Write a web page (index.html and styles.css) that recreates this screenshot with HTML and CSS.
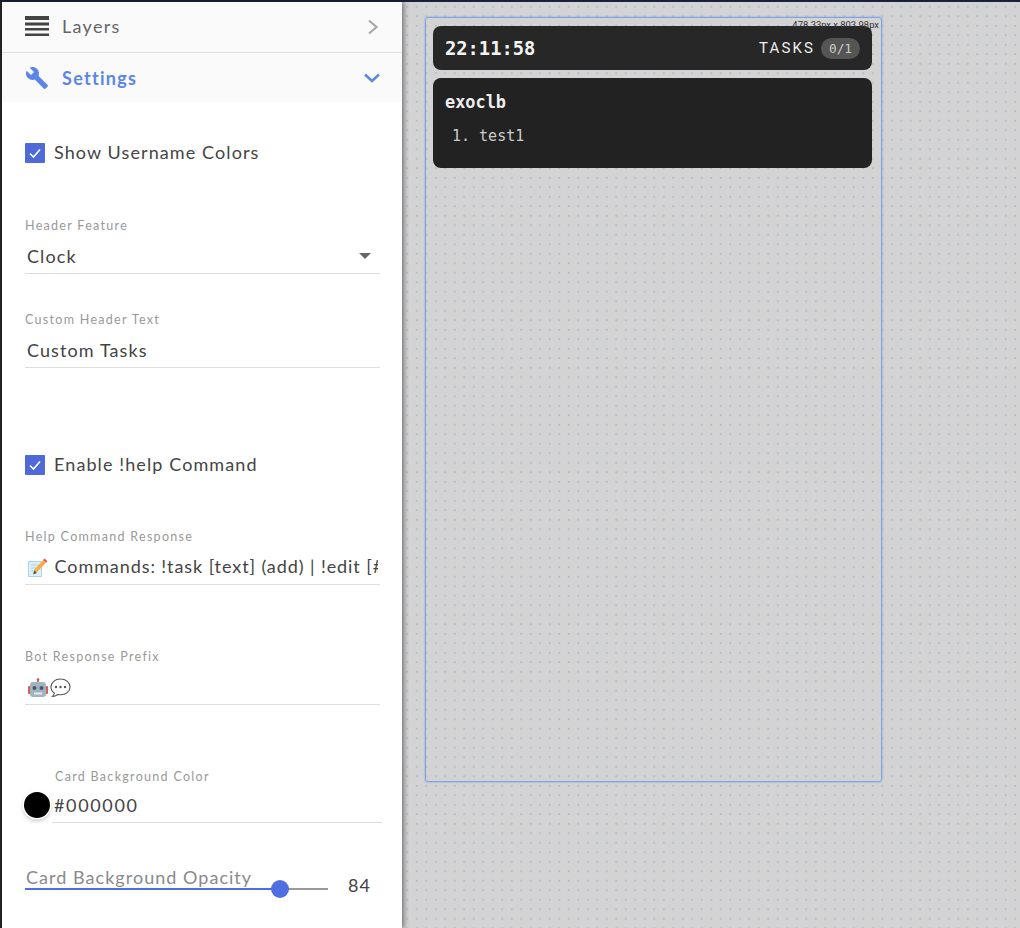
FILE: index.html
```html
<!DOCTYPE html>
<html lang="en">
<head>
    <meta charset="UTF-8">
    <title>Widget Editor</title>
    <link rel="stylesheet" href="styles.css">
</head>
<body>
    <div class="app">
        <aside class="sidebar">
            <div class="section-head">
                <svg class="head-icon" viewBox="0 0 24 20" width="24" height="20"><path fill="#444" d="M0 0h24v4H0zM0 6.5h24v3H0zM0 12h24v2.5H0zM0 17.5h24V20H0z"/></svg>
                <span class="head-title">Layers</span>
                <svg class="head-chevron chevron-right" viewBox="0 0 12 16" width="12" height="16"><path fill="none" stroke="#a8a8a8" stroke-width="2.2" d="M2 1.5 9.5 8 2 14.5"/></svg>
            </div>
            <div class="section-head section-head-open">
                <svg class="head-icon" viewBox="0 0 24 24" width="24" height="24"><path fill="#5b86e5" d="M22.7 19l-9.1-9.1c.9-2.3.4-5-1.5-6.9-2-2-5-2.4-7.4-1.3L9 6 6 9 1.6 4.7C.4 7.1.9 10.1 2.9 12.1c1.9 1.9 4.6 2.4 6.9 1.5l9.1 9.1c.4.4 1 .4 1.4 0l2.3-2.3c.5-.4.5-1.1.1-1.4z"/></svg>
                <span class="head-title">Settings</span>
                <svg class="head-chevron" viewBox="0 0 16 10" width="16" height="10"><path fill="none" stroke="#5b86e5" stroke-width="2.4" d="M1 1.5 8 8l7-6.5"/></svg>
            </div>

            <div class="settings">
                <label class="check first-check">
                    <span class="check-box"><svg viewBox="0 0 20 20" width="20" height="20"><path fill="none" stroke="#fff" stroke-width="1.6" d="M5 10.5 8.5 14 15 6.5"/></svg></span>
                    Show Username Colors
                </label>

                <div class="field field-header">
                    <div class="field-label">Header Feature</div>
                    <div class="field-input">Clock<span class="select-arrow"></span></div>
                </div>

                <div class="field field-custom">
                    <div class="field-label">Custom Header Text</div>
                    <div class="field-input">Custom Tasks</div>
                </div>

                <label class="check second-check">
                    <span class="check-box"><svg viewBox="0 0 20 20" width="20" height="20"><path fill="none" stroke="#fff" stroke-width="1.6" d="M5 10.5 8.5 14 15 6.5"/></svg></span>
                    Enable !help Command
                </label>

                <div class="field field-help">
                    <div class="field-label">Help Command Response</div>
                    <div class="field-input">
                        <div class="clip">
                            <svg class="emoji" viewBox="0 0 20 20" width="20" height="20">
                                <path fill="#dff0fb" stroke="#a9d3ee" d="M1.5 4.5h13v15h-13z"/>
                                <path stroke="#a9d3ee" d="M4 8h7M4 11h5M4 14h4"/>
                                <path fill="#f5b041" d="M7.5 12.5 16 3l3 2.8-9 9.2-3.500 1.200z"/>
                                <path fill="#e0584c" d="M16 3l1.5-1.5 3 2.8-1.5 1.500z"/>
                                <path fill="#555" d="M6 17.5l1.3-4 2.700 2.500z"/>
                            </svg>
                            Commands: !task [text] (add) | !edit [#] [text]
                        </div>
                    </div>
                </div>

                <div class="field field-prefix">
                    <div class="field-label">Bot Response Prefix</div>
                    <div class="field-input">
                        <svg class="emoji-pair" viewBox="0 0 44 20" width="44" height="20">
                            <path stroke="#c9504a" stroke-width="1.5" d="M10 4V1.5"/>
                            <circle cx="10" cy="1.5" r="1.3" fill="#c9504a"/>
                            <rect x="0" y="8" width="3" height="8" rx="1" fill="#d0605a"/>
                            <rect x="17" y="8" width="3" height="8" rx="1" fill="#d0605a"/>
                            <rect x="2" y="4" width="16" height="15" rx="3" fill="#9fb4c0"/>
                            <circle cx="6.5" cy="10" r="2" fill="#4a5a66"/>
                            <circle cx="13.5" cy="10" r="2" fill="#4a5a66"/>
                            <path stroke="#e4edf2" stroke-width="2" d="M6 15.5h8"/>
                            <path fill="#fff" stroke="#555" stroke-width="1.1" d="M32.5 1C27 1 23 4.5 23 9c0 2.6 1.3 4.7 3.4 6.1-.2 1.3-.9 2.5-1.900 3.400 2 0 3.800-.8 5.200-2 .9.200 1.800.3 2.800.3 5.500 0 9.500-3.400 9.500-7.800S38 1 32.500 1z"/>
                            <circle cx="28" cy="9" r="1.2" fill="#555"/>
                            <circle cx="32.5" cy="9" r="1.2" fill="#555"/>
                            <circle cx="37" cy="9" r="1.2" fill="#555"/>
                        </svg>
                    </div>
                </div>

                <div class="color-field">
                    <span class="swatch"></span>
                    <div class="color-body">
                        <div class="field-label">Card Background Color</div>
                        <div class="field-input">#000000</div>
                    </div>
                </div>

                <div class="slider-row">
                    <div class="slider">
                        <div class="slider-label">Card Background Opacity</div>
                        <div class="slider-track">
                            <div class="slider-fill"></div>
                            <span class="slider-thumb"></span>
                        </div>
                    </div>
                    <span class="slider-value">84</span>
                </div>
            </div>
        </aside>

        <main class="canvas">
            <div class="frame">
                <span class="frame-size">478.33px x 803.98px</span>
                <div class="card card-header">
                    <span class="clock">22:11:58</span>
                    <span class="tasks">TASKS <span class="badge">0/1</span></span>
                </div>
                <div class="card card-list">
                    <div class="username">exoclb</div>
                    <div class="task">1. test1</div>
                </div>
            </div>
        </main>
    </div>
</body>
</html>
```

FILE: styles.css
```css
* {
    box-sizing: border-box;
}
html, body {
    margin: 0;
    height: 100%;
    overflow: hidden;
}
body {
    font-family: Lato, "Open Sans", sans-serif;
    background-color: #d3d3d3;
    color: #444;
}
.app {
    display: flex;
    height: 928px;
    border-top: 2px solid #17213a;
}
.sidebar {
    width: 402px;
    flex: none;
    background-color: #fff;
    border-left: 2px solid #222;
    box-shadow: 2px 0 5px rgba(0, 0, 0, 0.45);
    position: relative;
    z-index: 1;
}
.section-head {
    height: 51px;
    display: flex;
    align-items: center;
    padding: 0 22px 2px 23px;
    background-color: #fafafa;
    border-bottom: 1px solid #e0e0e0;
    color: #666;
    font-size: 18px;
    letter-spacing: 1.3px;
}
.section-head-open {
    height: 49px;
    padding-bottom: 0;
    border-bottom: 0;
    color: #5b86e5;
    font-weight: 700;
}
.head-icon {
    flex: none;
}
.head-title {
    margin-left: 13px;
    flex: 1;
}
.head-chevron {
    flex: none;
}
.chevron-right {
    margin: 2px 1px 0 0;
}
.settings {
    padding: 0 22px 0 23px;
}
.check {
    display: flex;
    align-items: flex-start;
    gap: 9px;
    font-size: 18px;
    line-height: 19px;
    letter-spacing: 1.1px;
    height: 20px;
}
.first-check {
    margin-top: 41px;
}
.second-check {
    margin-top: 87px;
}
.check-box {
    width: 20px;
    height: 20px;
    flex: none;
    background-color: #5069d8;
    border-radius: 1px;
}
.check-box svg {
    display: block;
}
.field-header {
    margin-top: 54px;
}
.field-custom {
    margin-top: 37px;
}
.field-help {
    margin-top: 53px;
}
.field-prefix {
    margin-top: 63px;
}
.field-label {
    font-size: 12.5px;
    line-height: 14px;
    padding-top: 2px;
    letter-spacing: 1.3px;
    color: #999;
}
.field-input {
    position: relative;
    height: 41px;
    display: flex;
    align-items: center;
    padding: 5px 2px 0 2px;
    border-bottom: 1px solid #ddd;
    font-size: 18px;
    letter-spacing: 1.1px;
    color: #444;
}
.clip {
    white-space: nowrap;
    overflow: hidden;
    width: 100%;
    margin-top: -2px;
    letter-spacing: 0.92px;
}
.emoji {
    vertical-align: -4px;
    margin: 0 2px 0 0;
}
.emoji-pair {
    margin: 3px 0 0 1px;
}
.select-arrow {
    position: absolute;
    right: 9px;
    top: 20px;
    border-left: 6.5px solid transparent;
    border-right: 6.5px solid transparent;
    border-top: 6px solid #666;
}
.color-field {
    position: relative;
    margin-top: 63px;
    padding-left: 27px;
    margin-right: -2px;
}
.color-field .field-label {
    padding-left: 3px;
}
.color-field .field-input {
    height: 39px;
    padding: 3px 0 0 2px;
    letter-spacing: 1.65px;
}
.swatch {
    position: absolute;
    left: -1px;
    top: 24px;
    width: 26px;
    height: 26px;
    border-radius: 50%;
    background-color: #000;
    box-shadow: 0 0 0 1.5px #fff, 0 2px 5px rgba(0, 0, 0, 0.35);
}
.slider-row {
    display: flex;
    align-items: flex-end;
    margin-top: 44px;
}
.slider {
    width: 303px;
    flex: none;
}
.slider-label {
    font-size: 18px;
    line-height: 21px;
    letter-spacing: 1.03px;
    color: #8a8a8a;
    padding-left: 1px;
}
.slider-track {
    position: relative;
    height: 2px;
    background-color: #999;
}
.slider-fill {
    width: 84%;
    height: 2px;
    background-color: #4f6fe0;
}
.slider-thumb {
    position: absolute;
    left: 246px;
    top: -8px;
    width: 18px;
    height: 18px;
    border-radius: 50%;
    background-color: #4f6fe0;
}
.slider-value {
    margin-left: 20px;
    font-size: 18px;
    letter-spacing: 1.1px;
    line-height: 20px;
    position: relative;
    top: 5px;
}
.canvas {
    flex: 1;
    padding: 15px 0 0 23px;
    background-color: #d3d3d3;
    background-image: radial-gradient(circle, #b4bdd6 1px, transparent 1.4px);
    background-size: 9.5px 9.5px;
    background-position: 0.5px 0;
}
.frame {
    position: relative;
    width: 457px;
    height: 765px;
    border: 1px solid #7ea3e6;
    box-shadow: 0 0 1px 1px rgba(126, 163, 230, 0.35);
    border-radius: 3px;
    padding: 8px 9px 8px 7px;
}
.frame-size {
    position: absolute;
    top: 1px;
    right: 2px;
    font-family: Roboto, sans-serif;
    font-size: 9.4px;
    line-height: 11px;
    color: #333;
}
.card {
    border-radius: 8px;
    color: #fff;
}
.card-header {
    height: 44px;
    background-color: #272727;
    display: flex;
    align-items: center;
    justify-content: space-between;
    padding: 0 12px;
}
.clock {
    font-family: "DejaVu Sans Mono", monospace;
    font-weight: 700;
    font-size: 18.75px;
    color: #f4f4f4;
}
.tasks {
    display: flex;
    align-items: center;
    gap: 6px;
    font-family: Roboto, sans-serif;
    font-size: 15px;
    letter-spacing: 2.1px;
    color: #eee;
}
.badge {
    font-family: "DejaVu Sans Mono", monospace;
    font-size: 12.8px;
    letter-spacing: 0;
    width: 39px;
    height: 21px;
    border-radius: 11px;
    background-color: #555;
    color: #ccc;
    display: flex;
    align-items: center;
    justify-content: center;
}
.card-list {
    height: 90px;
    margin-top: 8px;
    background-color: #222;
    padding: 14px 12px 0;
}
.username {
    font-family: "DejaVu Sans Mono", monospace;
    font-weight: 700;
    font-size: 16.9px;
    line-height: 21px;
    color: #eee;
}
.task {
    font-family: "DejaVu Sans Mono", monospace;
    font-size: 15px;
    line-height: 20px;
    margin: 13px 0 0 7px;
    color: #ccc;
}
```
